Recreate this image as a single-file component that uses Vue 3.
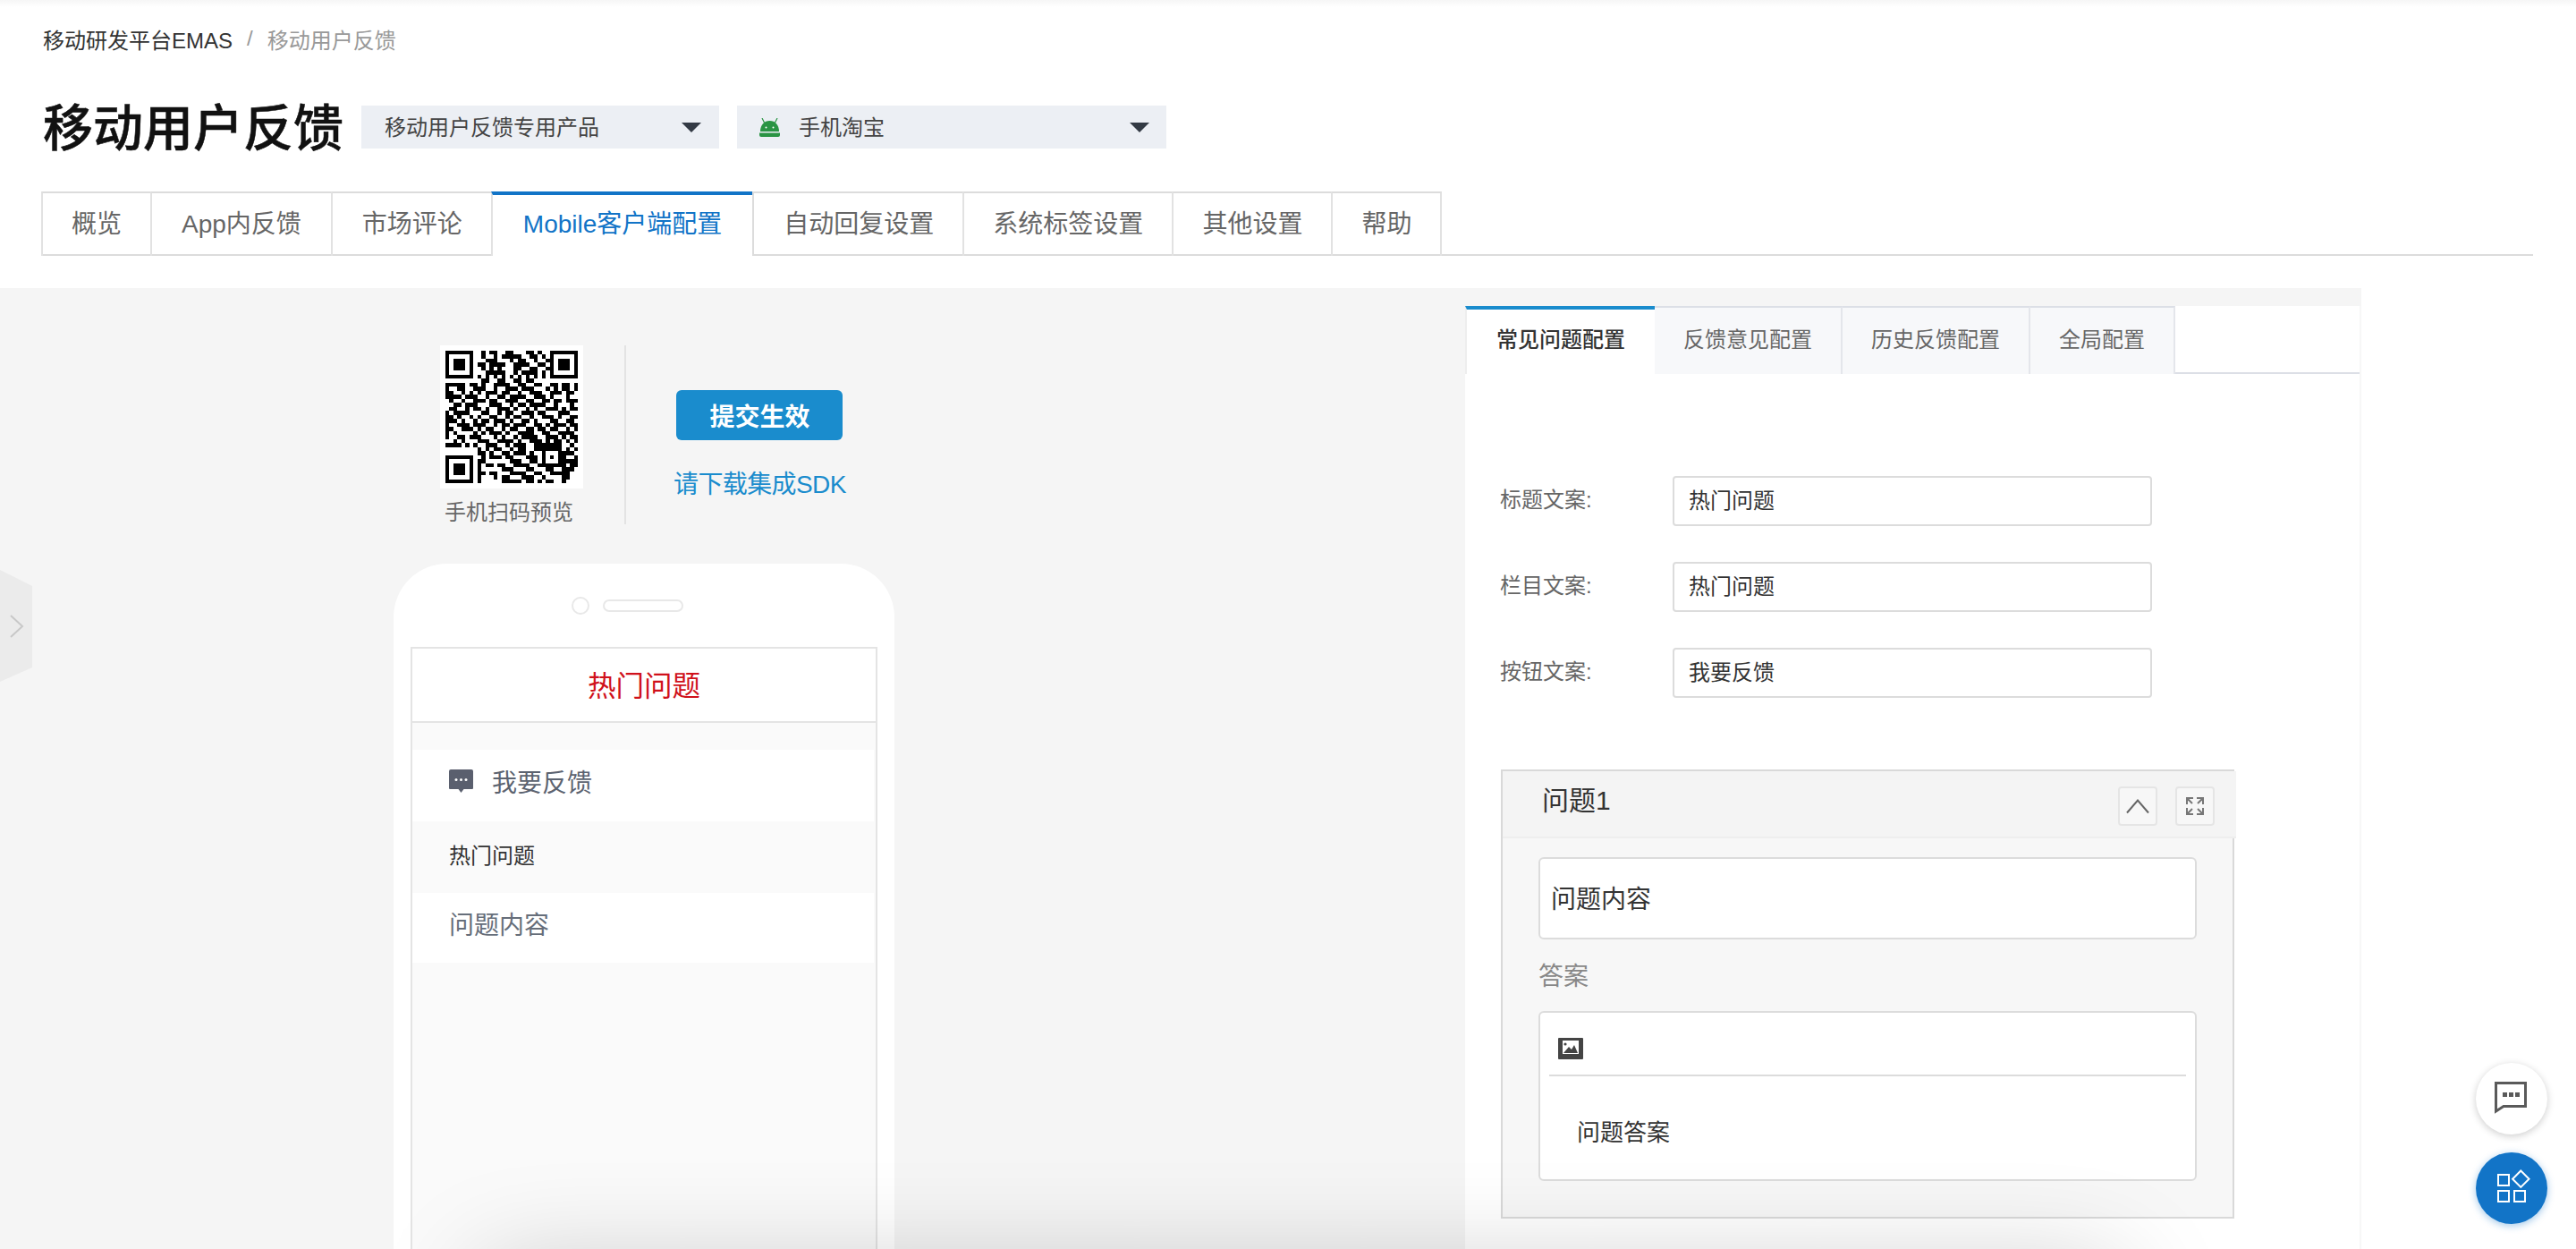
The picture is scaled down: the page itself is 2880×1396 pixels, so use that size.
<template>
  <div class="page">
    <header class="head">
      <div class="crumbs">
        <span>移动研发平台EMAS</span>
        <i>/</i>
        <span class="crumb-now">移动用户反馈</span>
      </div>
      <div class="title-row">
        <h1>移动用户反馈</h1>
        <div class="select select-product">
          <span>移动用户反馈专用产品</span>
          <b class="caret"></b>
        </div>
        <div class="select select-app">
          <svg class="android" width="25" height="21" viewBox="0 0 25 21">
            <path d="M2 15C2 7.500 6.500 3 12.500 3S23 7.500 23 15Z" fill="#2a9444" />
            <path d="M1 16.500h23V19a2 2 0 0 1-2 2H3a2 2 0 0 1-2-2Z" fill="#2a9444" />
            <path d="M6.500 5 4 0M18.500 5 21 0" stroke="#2a9444" stroke-width="1.200" />
            <circle cx="8.500" cy="10.500" r="1" fill="#fff" />
            <circle cx="16.500" cy="10.500" r="1" fill="#fff" />
          </svg>
          <span>手机淘宝</span>
          <b class="caret"></b>
        </div>
      </div>
      <nav class="tabs">
        <a v-for="t in mainTabs" :key="t" :class="['tab', { active: t === 'Mobile客户端配置' }]">{{ t }}</a>
      </nav>
    </header>

    <main class="main">
      <section class="preview">
        <div class="qr-row">
          <div class="qr-col">
            <div class="qr-box">
              <svg width="148" height="148" viewBox="0 0 33 33" shape-rendering="crispEdges">
                <path :d="qrPath" fill="#000" />
                <g v-for="f in finders" :key="f[0] + '-' + f[1]" :transform="`translate(${f[0]} ${f[1]})`">
                  <rect x="0.5" y="0.5" width="6" height="6" fill="none" stroke="#000" />
                  <rect x="2" y="2" width="3" height="3" fill="#000" />
                </g>
              </svg>
            </div>
            <p class="qr-tip">手机扫码预览</p>
          </div>
          <div class="actions">
            <button class="submit">提交生效</button>
            <a class="sdk">请下载集成SDK</a>
          </div>
        </div>

        <div class="phone">
          <div class="notch">
            <span class="camera"></span>
            <span class="speaker"></span>
          </div>
          <div class="screen">
            <div class="screen-title">热门问题</div>
            <div class="row feedback">
              <svg width="27" height="26" viewBox="0 0 27 26">
                <path d="M2 0h23a2 2 0 0 1 2 2v19a1 1 0 0 1-1 1h-9.500L13.500 26 10.500 22H1a1 1 0 0 1-1-1V2a2 2 0 0 1 2-2Z" fill="#5a5f6e" />
                <circle cx="8" cy="11.500" r="1.500" fill="#fff" />
                <circle cx="13.500" cy="11.500" r="1.500" fill="#fff" />
                <circle cx="19" cy="11.500" r="1.500" fill="#fff" />
              </svg>
              <span>我要反馈</span>
            </div>
            <div class="row section">热门问题</div>
            <div class="row question">问题内容</div>
          </div>
        </div>
      </section>

      <section class="config">
        <nav class="subtabs">
          <a v-for="(t, i) in subTabs" :key="t" :class="['subtab', { active: i === 0 }]">{{ t }}</a>
        </nav>

        <div class="form">
          <div v-for="f in fields" :key="f.label" class="field">
            <label>{{ f.label }}</label>
            <div class="input">{{ f.value }}</div>
          </div>
        </div>

        <div class="panel">
          <div class="panel-head">
            <span class="panel-title">问题1</span>
            <button class="icon-btn">
              <svg width="40" height="40" viewBox="0 0 40 40">
                <path d="M8 27.500 20 13.500l12 14" fill="none" stroke="#666" stroke-width="2" />
              </svg>
            </button>
            <button class="icon-btn">
              <svg width="40" height="40" viewBox="0 0 40 40">
                <path
                  d="M11 18v-7h7M11 11l6 6M29 18v-7h-7M29 11l-6 6M11 22v7h7M11 29l6-6M29 22v7h-7M29 29l-6-6"
                  fill="none"
                  stroke="#777"
                  stroke-width="2"
                />
              </svg>
            </button>
          </div>
          <div class="panel-body">
            <div class="question-input">问题内容</div>
            <div class="answer-label">答案</div>
            <div class="editor">
              <div class="toolbar">
                <svg width="28" height="24" viewBox="0 0 28 24">
                  <rect width="28" height="24" rx="1" fill="#444" />
                  <rect x="5" y="3" width="18" height="15" fill="#fff" />
                  <path d="M6 17 12 10l3 3 3-5 4 9Z" fill="#444" />
                  <circle cx="8" cy="7" r="1.600" fill="#444" />
                </svg>
              </div>
              <p class="answer-text">问题答案</p>
            </div>
          </div>
        </div>
      </section>

      <div class="handle">
        <svg width="36" height="125" viewBox="0 0 36 125">
          <polygon points="0,0 36,18 36,109 0,125" fill="#ebebeb" />
          <path d="M12 51 25 63 12 75" fill="none" stroke="#c8c8c8" stroke-width="2" />
        </svg>
      </div>
    </main>

    <div class="drop-shadow"></div>

    <button class="fab fab-chat">
      <svg width="80" height="80" viewBox="0 0 80 80">
        <path d="M22.500 22.500h33v26H31l-8.500 5.500Z" fill="none" stroke="#5a5a5a" stroke-width="3" />
        <rect x="30" y="33" width="5" height="5" fill="#5a5a5a" />
        <rect x="37" y="33" width="5" height="5" fill="#5a5a5a" />
        <rect x="44" y="33" width="5" height="5" fill="#5a5a5a" />
      </svg>
    </button>
    <button class="fab fab-apps">
      <svg width="80" height="80" viewBox="0 0 80 80">
        <g fill="none" stroke="#fff" stroke-width="2">
          <rect x="25" y="25" width="12" height="12" />
          <rect x="25" y="43" width="12" height="12" />
          <rect x="43" y="43" width="12" height="12" />
          <path d="M50.300 20.500 59.500 29.700 50.300 38.900 41.100 29.700Z" />
        </g>
      </svg>
    </button>
  </div>
</template>

<script setup>
const mainTabs = ['概览', 'App内反馈', '市场评论', 'Mobile客户端配置', '自动回复设置', '系统标签设置', '其他设置', '帮助']
const subTabs = ['常见问题配置', '反馈意见配置', '历史反馈配置', '全局配置']

const fields = [
  { label: '标题文案:', value: '热门问题' },
  { label: '栏目文案:', value: '热门问题' },
  { label: '按钮文案:', value: '我要反馈' },
]

const finders = [
  [0, 0],
  [26, 0],
  [0, 26],
]

// modules of the preview code, finder corners are drawn on top
const qrRows = [
  '000000000101100110001101000000000',
  '000000000100101111100110100000000',
  '000000000011100010110010010000000',
  '000000001101111001111001100000000',
  '000000000101010001100110010000000',
  '000000000011111001011110100000000',
  '000000001010101010101010100000000',
  '000000000110011001101100000000000',
  '111110110100111100110011001101101',
  '100110011100100111011100010101101',
  '110010101011101100100111001110110',
  '111101110010011011110011101000100',
  '010010011101100111001100110110111',
  '001101110001110010110111100100010',
  '011001011010011101001010011101011',
  '101111000110010110011101100011100',
  '110100101001100101100100111010011',
  '111010010110111010011010001100110',
  '100111011100101101110011010111011',
  '110011101011001011001101101100101',
  '101000010101110100111100110011110',
  '100110111000101001011110011101011',
  '001010001110011110100111010110101',
  '111101010011100101110011111110010',
  '000000001010110010110011111110101',
  '000000001101001101110100100011110',
  '000000000101110110001110101011001',
  '000000001100000011100110100011111',
  '000000001011011001111001111111011',
  '000000001000001110001100011001110',
  '000000001101100011110011001111100',
  '000000001000101100011100100001100',
  '000000001000001111101101011001000',
]

const qrPath = qrRows
  .map((row, y) =>
    row
      .split('')
      .map((c, x) => (c === '1' ? `M${x} ${y}h1v1h-1z` : ''))
      .join(''),
  )
  .join('')
</script>

<style scoped>
.page {
  position: relative;
  width: 2880px;
  height: 1396px;
  overflow: hidden;
  background: linear-gradient(#f6f6f6, #fff 8px);
  font-family: 'Liberation Sans', 'Noto Sans CJK SC', sans-serif;
  color: #333;
}
.head {
  padding: 26px 48px 0 46px;
}
.crumbs {
  display: flex;
  align-items: center;
  padding-left: 2px;
  height: 34px;
  font-size: 24px;
  color: #333;
}
.crumbs i {
  margin: 0 16px;
  font-style: normal;
  color: #999;
}
.crumb-now {
  color: #999;
}
.title-row {
  display: flex;
  align-items: center;
  margin-top: 58px;
  padding-left: 2px;
  height: 48px;
}
h1 {
  margin: 0 20px 0 0;
  padding-top: 4px;
  font-size: 56px;
  line-height: 48px;
  font-weight: 500;
  -webkit-text-stroke: 0.5px #111;
  color: #111;
}
.select {
  display: flex;
  align-items: center;
  height: 48px;
  background: #eceff4;
  font-size: 24px;
  color: #444;
}
.select span {
  margin-bottom: 4px;
}
.select-product {
  width: 400px;
  padding: 0 20px 0 26px;
  box-sizing: border-box;
}
.select-app {
  width: 480px;
  margin-left: 20px;
  padding: 0 19px 0 24px;
  box-sizing: border-box;
}
.android {
  margin-right: 20px;
}
.caret {
  margin-left: auto;
  border-top: 11px solid #333a44;
  border-left: 11px solid transparent;
  border-right: 11px solid transparent;
}
.tabs {
  display: flex;
  margin-top: 48px;
  border-bottom: 2px solid #dcdcdc;
  height: 70px;
}
.tab {
  display: flex;
  align-items: center;
  padding: 0 32px 6px;
  height: 64px;
  border-top: 2px solid #dcdcdc;
  border-left: 2px solid #e2e2e2;
  font-size: 28px;
  color: #666;
  white-space: nowrap;
}
.tab:nth-child(2) {
  padding-left: 33px;
  padding-right: 33px;
}
.tab:nth-child(3),
.tab:nth-child(5) {
  padding-left: 33px;
}
.tab:last-child {
  border-right: 2px solid #e2e2e2;
}
.tab.active {
  height: 60px;
  padding: 0 34px 8px;
  border-top: 4px solid #1274c7;
  color: #1274c7;
  background: #fff;
}
.tab.active + .tab {
  border-left-color: #dcdcdc;
}
.main {
  position: relative;
  display: flex;
  margin-top: 36px;
  width: 2640px;
  height: 1074px;
  overflow: hidden;
  background: #f5f5f5;
}
.preview {
  width: 1638px;
  flex: none;
}
.qr-row {
  display: flex;
  margin: 64px 0 0 492px;
  height: 200px;
}
.qr-col {
  width: 206px;
  border-right: 2px solid #e3e3e3;
}
.qr-box {
  display: flex;
  align-items: center;
  justify-content: center;
  width: 160px;
  height: 160px;
  background: #fff;
}
.qr-tip {
  margin: 10px 0 0;
  width: 154px;
  font-size: 24px;
  line-height: 34px;
  text-align: center;
  color: #666;
}
.actions {
  display: flex;
  flex-direction: column;
  align-items: center;
  margin-left: 53px;
  padding-top: 50px;
}
.submit {
  width: 186px;
  height: 56px;
  border: 0;
  border-radius: 6px;
  background: #1a8ccd;
  color: #fff;
  font-family: inherit;
  font-size: 28px;
  font-weight: 700;
}
.sdk {
  margin-top: 30px;
  font-size: 28px;
  line-height: 40px;
  letter-spacing: -0.6px;
  color: #1a8ccd;
  white-space: nowrap;
}
.phone {
  margin: 44px 0 0 440px;
  width: 560px;
  height: 800px;
  padding: 0 19px;
  box-sizing: border-box;
  border-radius: 60px 60px 0 0;
  background: #fff;
}
.notch {
  display: flex;
  align-items: center;
  justify-content: center;
  gap: 15px;
  height: 93px;
  padding-right: 38px;
  box-sizing: border-box;
}
.camera {
  width: 20px;
  height: 20px;
  box-sizing: border-box;
  border: 2px solid #e8e8e8;
  border-radius: 50%;
}
.speaker {
  width: 90px;
  height: 14px;
  box-sizing: border-box;
  border: 2px solid #e8e8e8;
  border-radius: 7px;
}
.screen {
  height: 700px;
  border: 2px solid #e4e4e4;
  background: #fafafa;
}
.screen-title {
  height: 79px;
  padding-bottom: 2px;
  border-bottom: 2px solid #e4e4e4;
  background: #fff;
  font-size: 31.5px;
  line-height: 85px;
  text-align: center;
  color: #d0111b;
}
.row {
  display: flex;
  align-items: center;
  box-sizing: border-box;
  margin-right: 2px;
  padding: 0 0 10px 41px;
}
.feedback {
  gap: 21px;
  height: 80px;
  margin-top: 30px;
  background: #fff;
  font-size: 28px;
  color: #5c6370;
}
.section {
  height: 80px;
  padding-bottom: 8px;
  font-size: 24px;
  color: #333;
}
.question {
  height: 78px;
  background: #fff;
  font-size: 28px;
  color: #666e7a;
}
.config {
  flex: 1;
  margin-top: 20px;
  background: #fff;
  border-right: 2px solid #f7f7f7;
}
.subtabs {
  display: flex;
  height: 74px;
  border-bottom: 2px solid #dcdfe6;
}
.subtab {
  display: flex;
  align-items: center;
  padding: 0 32px 8px;
  height: 66px;
  border-top: 2px solid #dcdfe6;
  border-right: 2px solid #e4e6eb;
  background: #f7f8fa;
  font-size: 24px;
  color: #666;
}
.subtab.active {
  height: 76px;
  padding: 0 33px 10px;
  border-top: 4px solid #1a8ccd;
  border-left: 2px solid #eee;
  border-right: 0;
  box-sizing: border-box;
  background: #fff;
  color: #333;
  font-weight: 500;
}
.form {
  display: flex;
  flex-direction: column;
  gap: 40px;
  padding: 114px 0 0 39px;
}
.field {
  display: flex;
  align-items: center;
}
.field label {
  width: 193px;
  padding-bottom: 8px;
  font-size: 24px;
  color: #666;
}
.input {
  width: 536px;
  height: 56px;
  box-sizing: border-box;
  padding-left: 16px;
  border: 2px solid #dcdcdc;
  border-radius: 4px;
  font-size: 24px;
  line-height: 52px;
  color: #333;
}
.panel {
  margin: 80px 0 0 40px;
  width: 820px;
  box-sizing: border-box;
  border: 2px solid #d9d9d9;
  background: #f7f7f7;
}
.panel-head {
  display: flex;
  align-items: center;
  gap: 20px;
  height: 75px;
  margin-right: -4px;
  padding: 4px 24px 0 44px;
  box-sizing: border-box;
  border-bottom: 2px solid #eee;
  background: #f4f4f4;
}
.panel-title {
  margin-right: auto;
  padding-bottom: 18px;
  font-size: 30px;
  color: #333;
}
.icon-btn {
  width: 44px;
  height: 44px;
  padding: 0;
  box-sizing: border-box;
  border: 2px solid #e5e5e5;
  border-radius: 4px;
  background: #f7f7f7;
}
.icon-btn svg {
  display: block;
}
.panel-body {
  padding: 21px 40px 40px;
}
.question-input {
  height: 92px;
  box-sizing: border-box;
  padding-left: 12px;
  border: 2px solid #dcdcdc;
  border-radius: 6px;
  background: #fff;
  font-size: 28px;
  line-height: 92px;
  color: #333;
}
.answer-label {
  margin-top: 22px;
  font-size: 28px;
  line-height: 40px;
  color: #888;
}
.editor {
  margin-top: 18px;
  height: 190px;
  box-sizing: border-box;
  padding: 0 10px;
  border: 2px solid #dcdcdc;
  border-radius: 6px;
  background: #fff;
}
.toolbar {
  height: 71px;
  padding: 28px 0 0 10px;
  box-sizing: border-box;
  border-bottom: 2px solid #dcdcdc;
}
.toolbar svg {
  display: block;
}
.answer-text {
  margin: 45px 0 0 31px;
  font-size: 26px;
  line-height: 36px;
  color: #333;
}
.handle {
  position: absolute;
  left: 0;
  top: 315px;
  height: 125px;
}
.drop-shadow {
  position: absolute;
  left: 570px;
  top: 1450px;
  width: 1770px;
  height: 100px;
  box-shadow: 0 0 120px 30px rgba(0, 0, 0, 0.22);
}
.fab {
  position: absolute;
  left: 2768px;
  width: 80px;
  height: 80px;
  padding: 0;
  border: 0;
  border-radius: 50%;
}
.fab svg {
  display: block;
}
.fab-chat {
  top: 1188px;
  background: #fff;
  box-shadow: 0 2px 8px rgba(0, 0, 0, 0.2);
}
.fab-apps {
  top: 1288px;
  background: #1274c7;
  box-shadow: 0 2px 8px rgba(18, 116, 199, 0.4);
}
</style>

<style>
html,
body {
  margin: 0;
  background: #fff;
}
</style>
